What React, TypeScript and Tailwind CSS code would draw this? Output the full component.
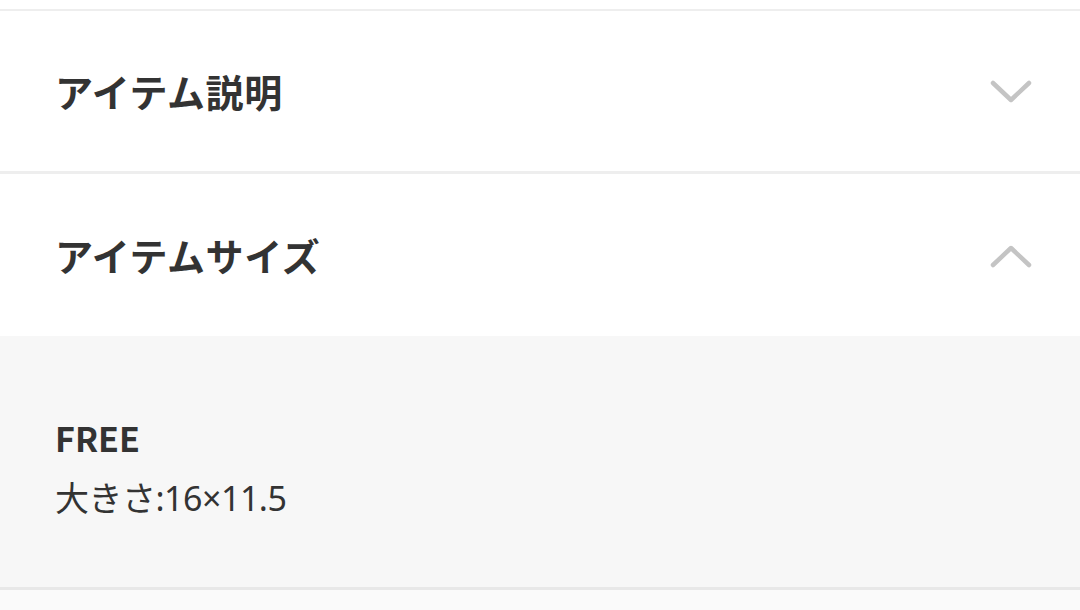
import React from "react";

const Chevron = ({ up }: { up?: boolean }) => (
  <svg width="42" height="25" viewBox="0 0 42 25" fill="none">
    <polyline
      points={up ? "3,21 21,4 39,21" : "3,4 21,21 39,4"}
      stroke="#c4c4c4"
      strokeWidth="4.5"
      strokeLinecap="round"
      strokeLinejoin="round"
    />
  </svg>
);

export default function App() {
  const font = { fontFamily: '"Noto Sans CJK JP", "Noto Sans", sans-serif' };
  const latin = { fontFamily: '"Noto Sans", "Noto Sans CJK JP", sans-serif' };
  return (
    <div className="w-[1080px] h-[610px] overflow-hidden bg-white text-[#333333]" style={font}>
      <div className="h-[9px] bg-white" />
      <div className="h-[2px] bg-[#eeeeee]" />
      <div className="h-[160px] flex items-center justify-between pl-[55px] pr-[48px]">
        <span className="text-[38px] font-bold tracking-[0.6px] -mt-[2px]">アイテム説明</span>
        <Chevron />
      </div>
      <div className="h-[3px] bg-[#eeeeee]" />
      <div className="h-[162px] flex items-center justify-between pl-[55px] pr-[48px]">
        <span className="text-[38px] font-bold tracking-[0.6px] -mt-[2px]">アイテムサイズ</span>
        <div className="mt-[2px]">
          <Chevron up />
        </div>
      </div>
      <div className="h-[251px] bg-[#f7f7f7] pl-[55px] pt-[72px]">
        <div className="text-[34px] font-semibold leading-[60px]">FREE</div>
        <div className="text-[34px] leading-[60px] tracking-[-0.5px]" style={latin}>大きさ:16×11.5</div>
      </div>
      <div className="h-[3px] bg-[#e8e8e8]" />
      <div className="h-[20px] bg-[#fafafa]" />
    </div>
  );
}
